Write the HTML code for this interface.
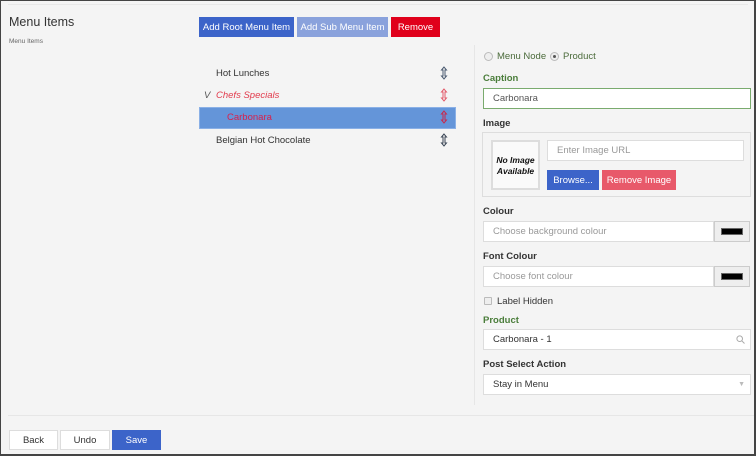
<!DOCTYPE html>
<html><head><style>
*{box-sizing:border-box;margin:0;padding:0}
body{width:756px;height:456px;background:#f4f4f4;font-family:"Liberation Sans",Arial,sans-serif;font-size:10px;color:#333;position:relative;overflow:hidden}
.frame{position:absolute;inset:0;border:1px solid #444;border-right-width:2px;border-bottom-width:2px;pointer-events:none}
.a{position:absolute}
.btn{position:absolute;color:#fff;font-size:9.5px;text-align:center;line-height:20px;padding-top:1px;height:20px;white-space:nowrap}
.lbl{position:absolute;left:483px;font-weight:bold;font-size:9.5px;color:#333}
.g{color:#4a7d3a}
.inp{position:absolute;background:#fff;border:1px solid #ddd;height:21px;line-height:20px;padding-left:9px;font-size:9.5px;color:#555}
.ph{color:#999}
.sw{position:absolute;left:714px;width:36px;height:21px;border:1px solid #ccc;background:#eee}
.sw i{position:absolute;left:6px;top:6px;width:22px;height:7px;background:#000;border:1px solid #666}
.arr{position:absolute;left:440px;width:8px;height:14px}
.li{position:absolute;font-size:9.5px}
</style></head><body>
<div class="a" style="left:8px;top:4px;right:8px;border-top:1px solid #e8e8e8"></div>
<div class="a" style="left:9px;top:15px;font-size:12.5px;color:#333">Menu Items</div>
<div class="a" style="left:9px;top:38px;font-size:6.5px;color:#666">Menu Items</div>
<div class="btn" style="left:199px;top:17px;width:95px;background:#3c64c9">Add Root Menu Item</div>
<div class="btn" style="left:297px;top:17px;width:91px;background:#8aa2dc">Add Sub Menu Item</div>
<div class="btn" style="left:391px;top:17px;width:49px;background:#e0001b">Remove</div>

<div class="li" style="left:216px;top:68px">Hot Lunches</div>
<svg class="arr" style="top:66px" viewBox="0 0 8 14"><path d="M4 1L1.5 4H3V10H1.5L4 13L6.5 10H5V4H6.5Z" fill="none" stroke="#4a5a70" stroke-width="1"/></svg>
<div class="li" style="left:204px;top:90px;font-style:italic;color:#555">V</div>
<div class="li" style="left:216px;top:90px;font-style:italic;color:#e23b4d">Chefs Specials</div>
<svg class="arr" style="top:88px" viewBox="0 0 8 14"><path d="M4 1L1.5 4H3V10H1.5L4 13L6.5 10H5V4H6.5Z" fill="none" stroke="#e25a6a" stroke-width="1"/></svg>
<div class="a" style="left:199px;top:107px;width:257px;height:22px;background:#6495d9;border:1px solid #8ab0e6"></div>
<div class="li" style="left:227px;top:112px;color:#d9204a">Carbonara</div>
<svg class="arr" style="top:110px" viewBox="0 0 8 14"><path d="M4 1L1.5 4H3V10H1.5L4 13L6.5 10H5V4H6.5Z" fill="none" stroke="#c8284c" stroke-width="1"/></svg>
<div class="li" style="left:216px;top:135px">Belgian Hot Chocolate</div>
<svg class="arr" style="top:133px" viewBox="0 0 8 14"><path d="M4 1L1.5 4H3V10H1.5L4 13L6.5 10H5V4H6.5Z" fill="none" stroke="#3a4555" stroke-width="1"/></svg>

<div class="a" style="left:474px;top:45px;height:360px;border-left:1px solid #e6e6e6"></div>
<div class="a" style="left:484px;top:52px;width:9px;height:9px;border-radius:50%;border:1px solid #bbb;background:#eee"></div>
<div class="a" style="left:497px;top:51px;font-size:9.5px;color:#4a6a3a">Menu Node</div>
<div class="a" style="left:550px;top:52px;width:9px;height:9px;border-radius:50%;border:1px solid #bbb;background:#eee"><i style="position:absolute;left:2px;top:2px;width:3px;height:3px;border-radius:50%;background:#555"></i></div>
<div class="a" style="left:563px;top:51px;font-size:9.5px;color:#4a6a3a">Product</div>

<div class="lbl g" style="top:73px">Caption</div>
<div class="inp" style="left:483px;top:88px;width:268px;border-color:#7aab6e">Carbonara</div>
<div class="lbl" style="top:118px">Image</div>
<div class="a" style="left:482px;top:132px;width:269px;height:65px;border:1px solid #ddd;background:#f4f4f4"></div>
<div class="a" style="left:491px;top:140px;width:49px;height:50px;border:2px solid #ddd;background:#fafafa;font-size:8.5px;font-weight:bold;font-style:italic;color:#111;text-align:center;padding-top:13px;line-height:11px">No Image<br>Available</div>
<div class="inp" style="left:547px;top:140px;width:197px"><span class="ph">Enter Image URL</span></div>
<div class="btn" style="left:547px;top:170px;width:52px;background:#3c64c9">Browse...</div>
<div class="btn" style="left:602px;top:170px;width:74px;background:#e8596a">Remove Image</div>

<div class="lbl" style="top:206px">Colour</div>
<div class="inp" style="left:483px;top:221px;width:231px"><span class="ph">Choose background colour</span></div>
<div class="sw" style="top:221px"><i></i></div>
<div class="lbl" style="top:251px">Font Colour</div>
<div class="inp" style="left:483px;top:266px;width:231px"><span class="ph">Choose font colour</span></div>
<div class="sw" style="top:266px"><i></i></div>
<div class="a" style="left:484px;top:297px;width:8px;height:8px;border:1px solid #bbb;background:#eee;border-radius:1px"></div>
<div class="a" style="left:497px;top:296px;font-size:9.5px">Label Hidden</div>
<div class="lbl g" style="top:315px">Product</div>
<div class="inp" style="left:483px;top:329px;width:268px;color:#333">Carbonara - 1<svg style="position:absolute;right:5px;top:5px" width="9" height="9" viewBox="0 0 9 9"><circle cx="3.7" cy="3.7" r="2.8" fill="none" stroke="#aaa"/><path d="M5.8 5.8L8.5 8.5" stroke="#aaa"/></svg></div>
<div class="lbl" style="top:359px">Post Select Action</div>
<div class="inp" style="left:483px;top:374px;width:268px;color:#333">Stay in Menu<span style="position:absolute;right:5px;top:0;color:#bbb;font-size:7px">&#9660;</span></div>

<div class="a" style="left:8px;top:415px;right:2px;border-top:1px solid #e6e6e6"></div>
<div class="btn" style="left:9px;top:430px;width:49px;background:#fff;border:1px solid #ddd;color:#333;line-height:18px">Back</div>
<div class="btn" style="left:60px;top:430px;width:50px;background:#fff;border:1px solid #ddd;color:#333;line-height:18px">Undo</div>
<div class="btn" style="left:112px;top:430px;width:49px;background:#3c64c9">Save</div>
<div class="frame"></div>
</body></html>
